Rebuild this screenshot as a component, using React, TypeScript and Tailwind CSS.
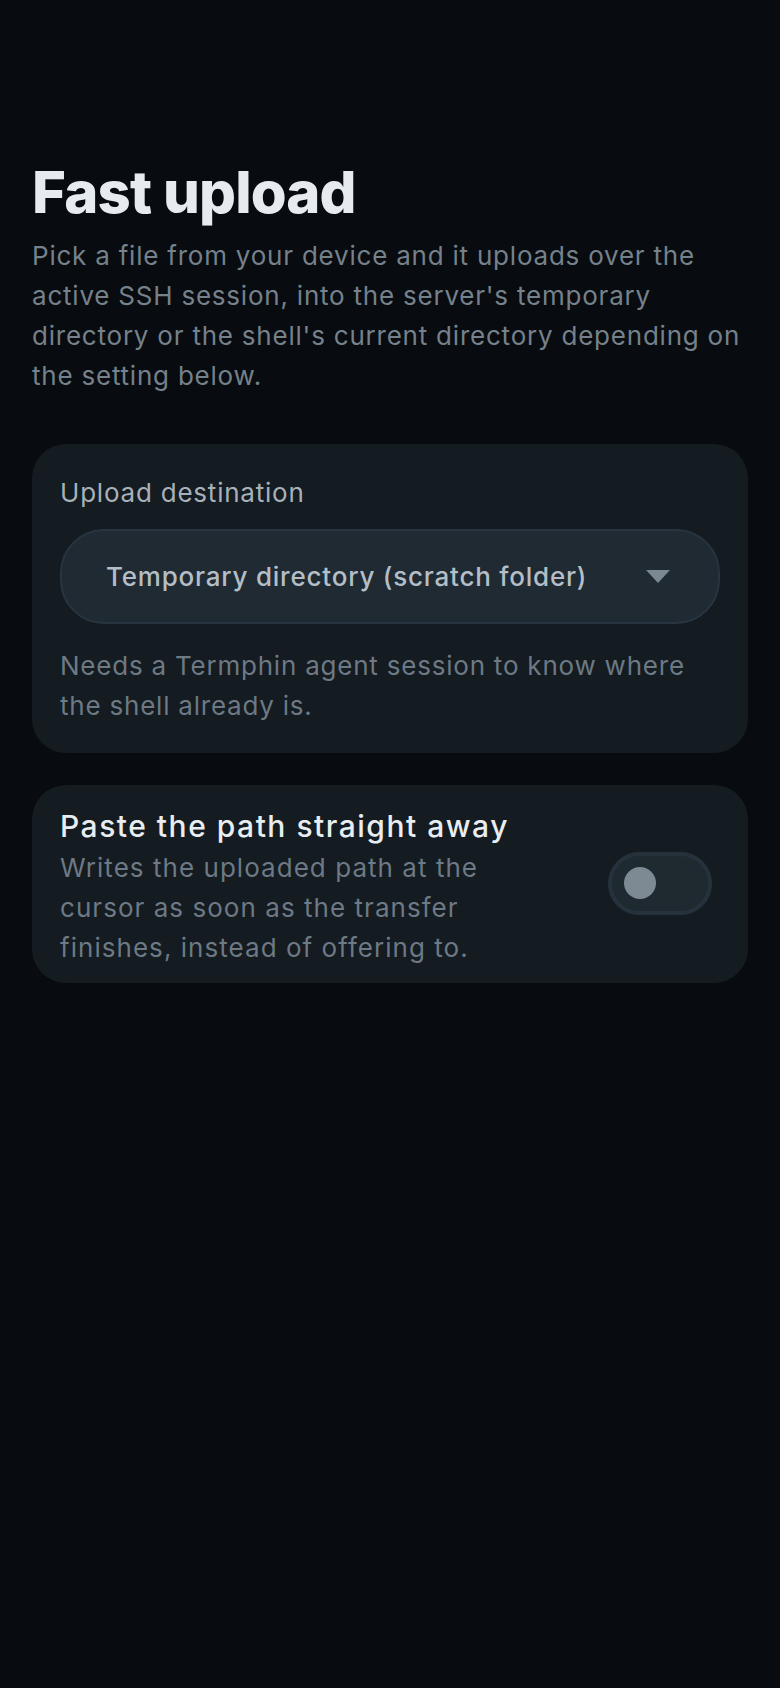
import React from "react";

export default function App() {
  return (
    <div
      className="min-h-[1688px] w-full bg-[#080b0f] px-[32px] pt-[160px]"
      style={{ fontFamily: "Inter, 'Noto Sans', sans-serif" }}
    >
      <h1 className="text-[58px] font-extrabold leading-[64px] tracking-[-0.015em] text-[#e6ebef]">
        Fast upload
      </h1>
      <p className="mt-[12px] text-[26px] leading-[40px] tracking-[0.03em] text-[#75818b]">
        Pick a file from your device and it uploads over the active SSH session, into the server's temporary directory or the shell's current directory depending on the setting below.
      </p>

      <div className="mt-[48px] rounded-[34px] bg-[#141b21] px-[28px] pb-[27px] pt-[31px]">
        <div className="text-[26px] leading-[36px] tracking-[0.03em] text-[#a7b1b9]">Upload destination</div>
        <button className="mt-[18px] flex h-[95px] w-full items-center justify-between rounded-[44px] border-2 border-[#283540] bg-[#1f2a33] pl-[44px] pr-[48px]">
          <span className="text-[26px] font-medium tracking-[0.03em] text-[#b4bec6]">Temporary directory (scratch folder)</span>
          <svg width="24" height="13" viewBox="0 0 24 13">
            <path d="M0 0 H24 L12 13 Z" fill="#7b8892" />
          </svg>
        </button>
        <p className="mt-[22px] text-[26px] leading-[40px] tracking-[0.03em] text-[#6d7984]">
          Needs a Termphin agent session to know where the shell already is.
        </p>
      </div>

      <div className="mt-[32px] flex items-center rounded-[34px] bg-[#141b21] pb-[15px] pl-[28px] pr-[36px] pt-[23px]">
        <div className="flex-1">
          <div className="text-[30px] font-medium leading-[36px] tracking-[0.05em] text-[#e8edf1]">
            Paste the path straight away
          </div>
          <p className="mt-[4px] max-w-[450px] text-[26px] leading-[40px] tracking-[0.04em] text-[#6d7984]">
            Writes the uploaded path at the cursor as soon as the transfer finishes, instead of offering to.
          </p>
        </div>
        <div className="-mt-[10px] flex h-[63px] w-[104px] shrink-0 items-center rounded-full border-[4px] border-[#26323b] bg-[#1e2930] pl-[12px]">
          <div className="h-[32px] w-[32px] rounded-full bg-[#7d8a94]" />
        </div>
      </div>
    </div>
  );
}
